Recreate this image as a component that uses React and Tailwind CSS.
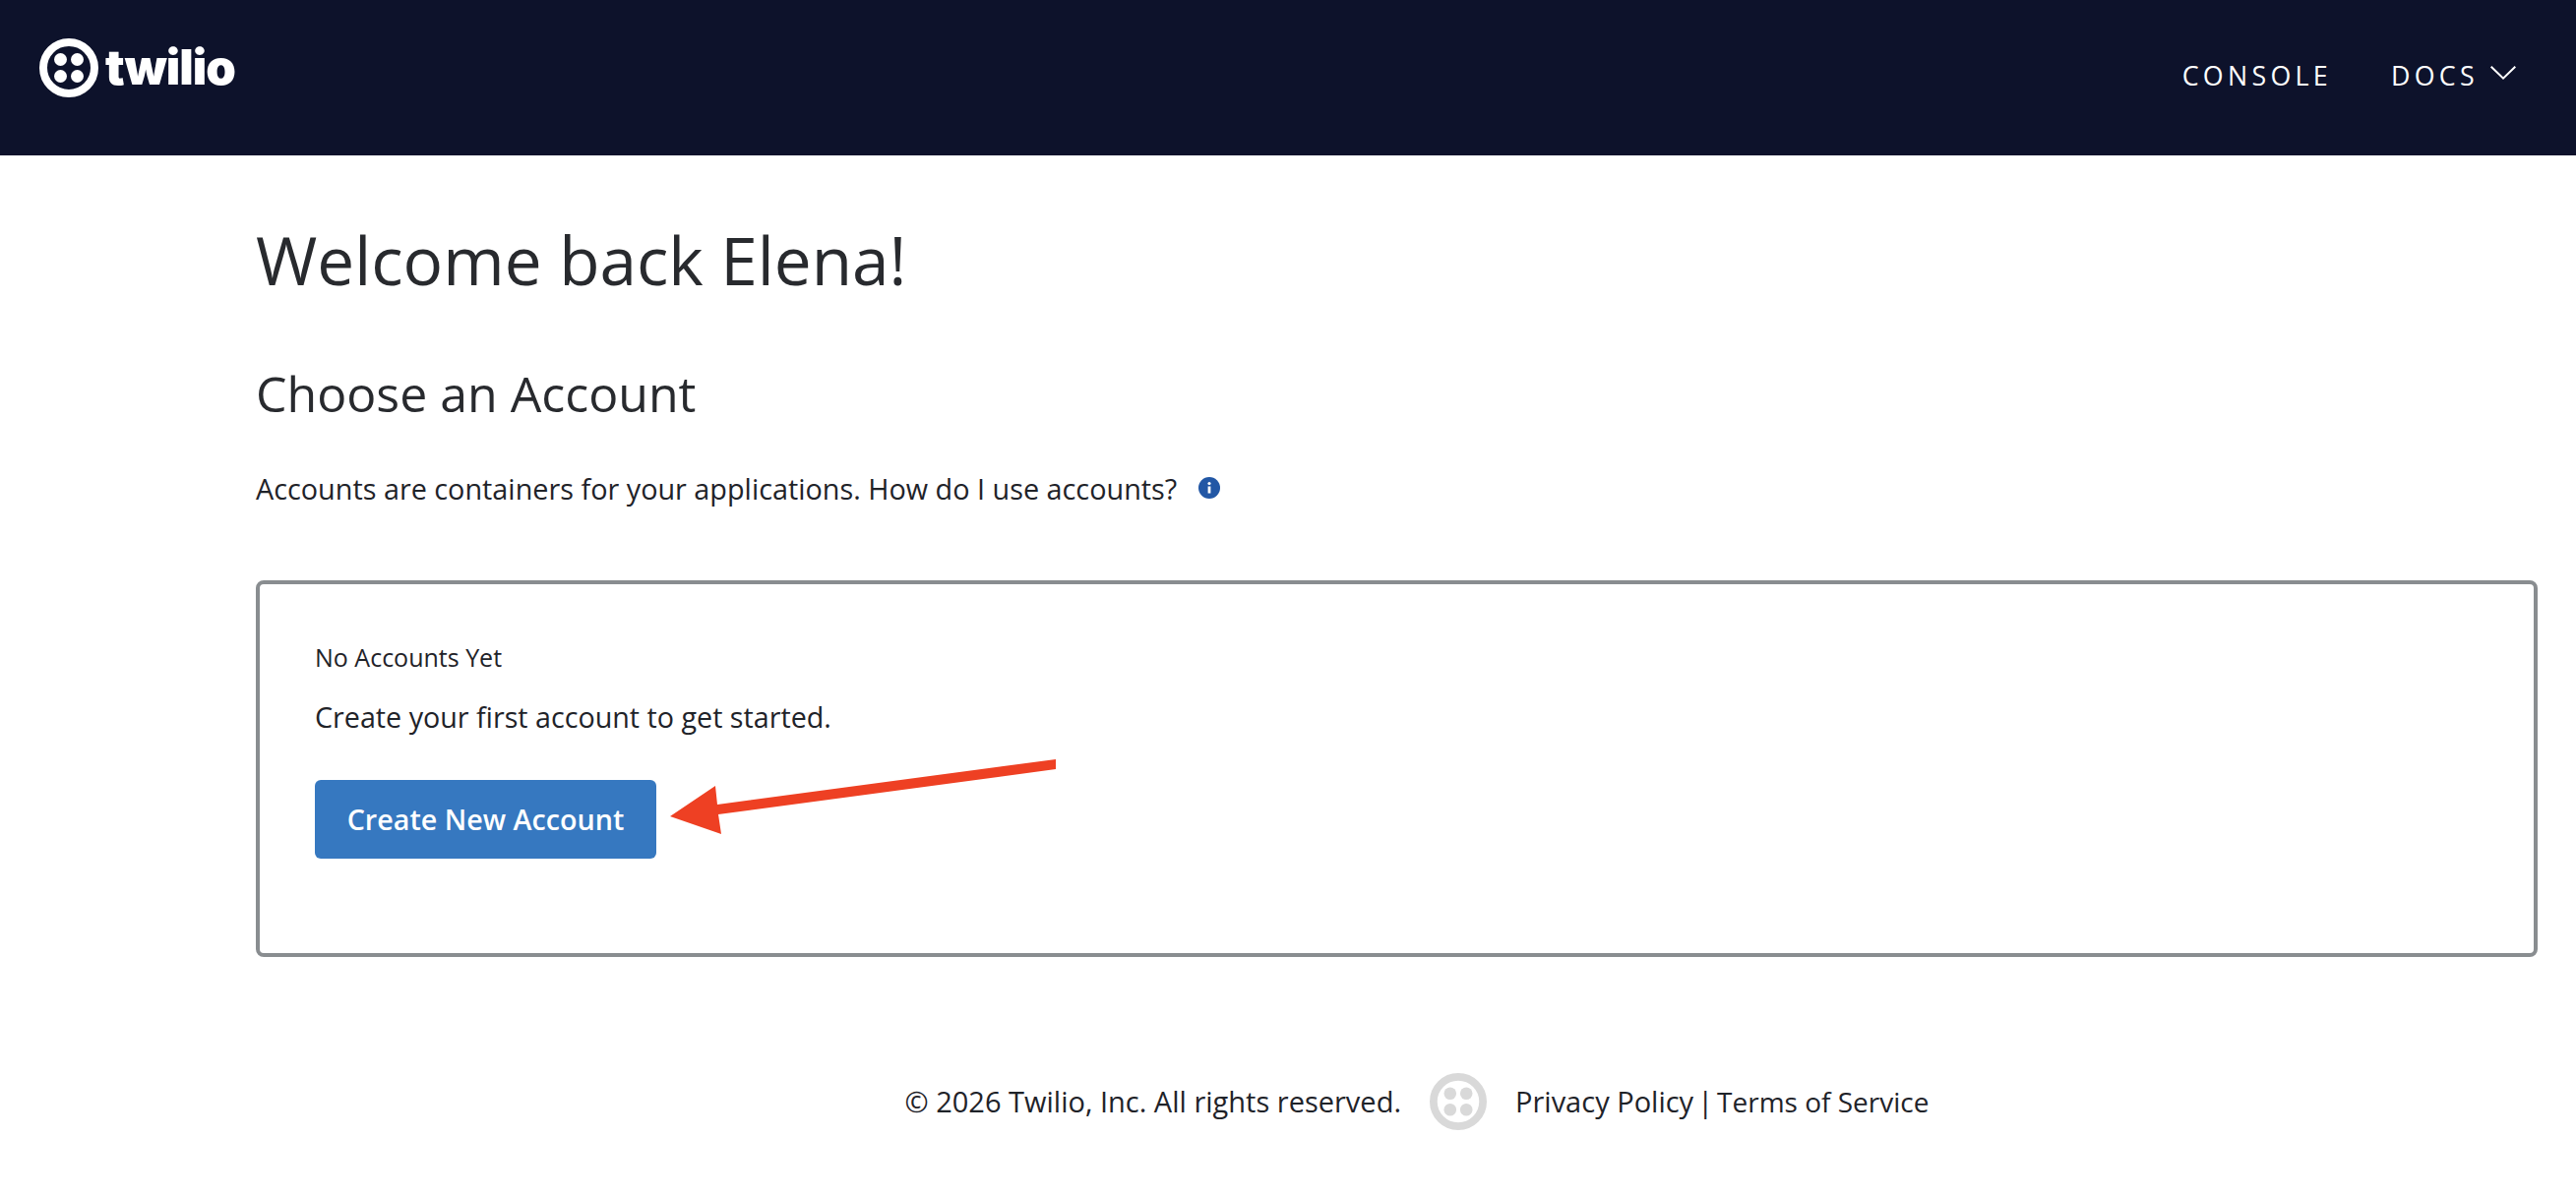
function TwilioMark({ className, ring, dots }) {
    return (
        <svg viewBox="0 0 60 60" className={className}>
            <circle cx="30" cy="30" r="26" fill="none" stroke={ring} strokeWidth="8" />
            <circle cx="21.5" cy="21.5" r="6.5" fill={dots} />
            <circle cx="38.5" cy="21.5" r="6.5" fill={dots} />
            <circle cx="21.5" cy="38.5" r="6.5" fill={dots} />
            <circle cx="38.5" cy="38.5" r="6.5" fill={dots} />
        </svg>
    );
}

function Header() {
    return (
        <header className="h-[158px] bg-[#0d122b] flex items-start justify-between pl-[40px] pr-[61px]">
            <div className="flex items-center mt-[39px] h-[60px]">
                <TwilioMark className="w-[60px] h-[60px]" ring="#ffffff" dots="#ffffff" />
                <span className="ml-[7px] text-white text-[49px] leading-[60px] font-black tracking-[-1px] font-['Inter',sans-serif]">twilio</span>
            </div>
            <nav className="flex items-start mt-[60px] text-white text-[26.8px] leading-[34px] tracking-[0.16em] font-medium">
                <span>CONSOLE</span>
                <span className="ml-[60px]">DOCS</span>
                <svg viewBox="0 0 26 14" className="w-[26px] h-[14px] ml-[12px] mt-[7px]" fill="none" stroke="#ffffff" strokeWidth="2">
                    <path d="M0.7 0.7 L13 12.6 L25.3 0.7" />
                </svg>
            </nav>
        </header>
    );
}

function RedArrow() {
    return (
        <svg viewBox="0 0 400 80" className="absolute left-[417px] top-[178px] w-[400px] h-[80px]">
            <path fill="#ee4023" d="M0 58 L46 27 L48 46 L392 0 L392 10 L49 56 L52 76 Z" />
        </svg>
    );
}

function AccountBox() {
    return (
        <div className="relative mt-[74px] h-[383px] border-4 border-[#898d90] rounded-lg pl-[56px] pt-[57px]">
            <p className="text-[25px] leading-[34px] text-[#1f2329]">No Accounts Yet</p>
            <p className="mt-[25px] text-[28.7px] leading-[38px] text-[#1f2329]">Create your first account to get started.</p>
            <button className="mt-[45px] w-[347px] h-[80px] bg-[#3678c0] rounded-md text-white text-[28.7px] font-semibold">Create New Account</button>
            <RedArrow />
        </div>
    );
}

function Footer() {
    return (
        <footer className="mt-[118px] flex items-center justify-center text-[29px] leading-[38px] text-[#1f2329] pl-[262px]">
            <span>© 2026 Twilio, Inc. All rights reserved.</span>
            <TwilioMark className="w-[58px] h-[58px] mx-[29px]" ring="#d9d9d9" dots="#d9d9d9" />
            <span className="flex gap-[4px]">
                <span>Privacy Policy</span>
                <span>|</span>
                <span className="text-[28px]">Terms of Service</span>
            </span>
        </footer>
    );
}

export default function App() {
    return (
        <div className="min-h-[1216px] bg-white font-['Open_Sans',sans-serif] overflow-hidden">
            <Header />
            <main className="pl-[260px] pr-[39px] pt-[66px]">
                <h1 className="text-[67.5px] leading-[80px] text-[#282a2e] font-medium">Welcome back Elena!</h1>
                <h2 className="mt-[66px] text-[50px] leading-[60px] text-[#282a2e] font-medium">Choose an Account</h2>
                <div className="mt-[48px] flex items-center text-[28.8px] leading-[38px] text-[#1f2329]">
                    <span>Accounts are containers for your applications. How do I use accounts?</span>
                    <svg viewBox="0 0 22 22" className="w-[22px] h-[22px] ml-[22px] -mt-[3px]">
                        <circle cx="11" cy="11" r="11" fill="#2257a5" />
                        <circle cx="11" cy="6.5" r="1.6" fill="#ffffff" />
                        <rect x="9.6" y="9.5" width="2.8" height="7" fill="#ffffff" />
                    </svg>
                </div>
                <AccountBox />
            </main>
            <Footer />
        </div>
    );
}
